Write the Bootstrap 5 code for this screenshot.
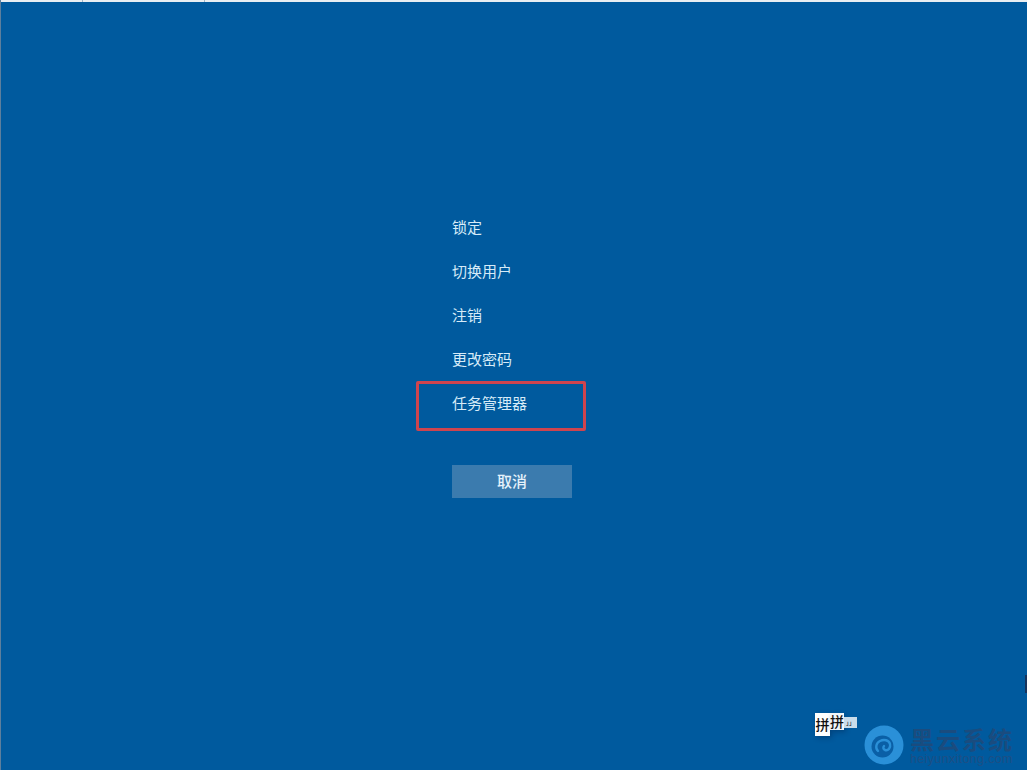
<!DOCTYPE html>
<html lang="zh-CN">

<head>
  <meta charset="UTF-8">
  <meta name="viewport" content="width=device-width, initial-scale=1.0">
  <title>安全选项</title>
  <link rel="stylesheet" href="https://cdn.jsdelivr.net/npm/bootstrap@5.3.3/dist/css/bootstrap.min.css" />

  <style>
    html, body {
      height: 100%;
    }

    body {
      background-color: #005a9e;
      font-family: "Noto Sans CJK SC", "Liberation Sans", sans-serif;
      overflow: hidden;
    }

    .screen {
      height: 770px;
      border-left: 1px solid #5d7f9d;
    }

    .top-strip {
      height: 2px;
      background-color: #e9eef2;
    }

    .top-strip span {
      border-right: 1px solid #9fb4c6;
    }

    .strip-a { width: 82px; }
    .strip-b { width: 122px; }

    .secure-menu {
      width: 120px;
      margin-left: 451px;
      margin-top: 203px;
    }

    .menu-item {
      height: 44px;
      line-height: 44px;
      font-size: 15px;
      color: #d6ebf8;
      white-space: nowrap;
    }

    .cancel-btn {
      width: 120px;
      height: 33px;
      margin-top: 40px;
      padding: 0 0 2px;
      border: 0;
      border-radius: 0;
      background-color: #3b7bae;
      color: #e6f2fb;
      font-size: 15px;
      font-weight: 500;
      line-height: 31px;
    }

    .red-box {
      position: absolute;
      left: -36px;
      top: 0;
      width: 170px;
      height: 50px;
      border: 3px solid #cf444e;
      border-radius: 2px;
    }

    .ime-tip {
      position: absolute;
      left: 814px;
      top: 713px;
      display: flex;
      align-items: flex-start;
      color: #111;
      white-space: nowrap;
    }

    .ime-cell {
      background-color: #fff;
      font-size: 14px;
      font-weight: 500;
      text-align: center;
    }

    .ime-first {
      width: 15px;
      height: 23px;
      line-height: 22px;
      box-shadow: 2px 2px 5px rgba(0, 30, 70, .35);
    }

    .ime-second {
      width: 14px;
      height: 17px;
      line-height: 17px;
      background-color: #f1f6fa;
      box-shadow: 2px 2px 5px rgba(0, 30, 70, .35);
    }

    .ime-tail {
      width: 13px;
      height: 11px;
      margin-top: 4px;
      background-color: #c9dcea;
      font-size: 6px;
      line-height: 11px;
      white-space: nowrap;
    }

    .wm-logo {
      position: absolute;
      left: 863px;
      top: 725px;
    }

    .wm-text {
      position: absolute;
      left: 909px;
      top: 725px;
      color: #1a4c7f;
    }

    .wm-title {
      font-size: 24px;
      font-weight: 700;
      line-height: 27px;
      letter-spacing: 2px;
      white-space: nowrap;
    }

    .wm-url {
      font-family: "Liberation Sans", sans-serif;
      font-size: 12.5px;
      line-height: 14px;
      letter-spacing: .35px;
      color: #1d4f85;
    }

    .edge-mark {
      position: absolute;
      right: 0;
      top: 675px;
      width: 2px;
      height: 18px;
      background-color: #17345c;
    }
  </style>
</head>

<body>
  <div class="screen position-relative">
    <div class="top-strip d-flex">
      <span class="strip-a"></span>
      <span class="strip-b"></span>
    </div>

    <div class="secure-menu d-flex flex-column">
      <div class="menu-item">锁定</div>
      <div class="menu-item">切换用户</div>
      <div class="menu-item">注销</div>
      <div class="menu-item">更改密码</div>
      <div class="menu-item position-relative">任务管理器<div class="red-box"></div></div>
      <button class="btn cancel-btn" type="button">取消</button>
    </div>

    <div class="ime-tip">
      <div class="ime-cell ime-first">拼</div>
      <div class="ime-cell ime-second">拼</div>
      <div class="ime-cell ime-tail">」」</div>
    </div>

    <svg class="wm-logo" width="40" height="40" viewBox="0 0 40 40">
      <circle cx="20" cy="20" r="19.5" fill="#2a90d8"/>
      <circle cx="18.5" cy="21.5" r="11" fill="#0a5fa6"/>
      <path d="M14 26c-3-3-2-8 2-10 4-2 9-1 10 3 1 4-2 7-5 6-2-1-2-3-1-4" fill="none" stroke="#2a90d8" stroke-width="2.4" stroke-linecap="round"/>
    </svg>
    <div class="wm-text">
      <div class="wm-title">黑云系统</div>
      <div class="wm-url">heiyunxitong.com</div>
    </div>

    <div class="edge-mark"></div>
  </div>

  <script src="https://cdn.jsdelivr.net/npm/bootstrap@5.3.3/dist/js/bootstrap.bundle.min.js"></script>
</body>

</html>
